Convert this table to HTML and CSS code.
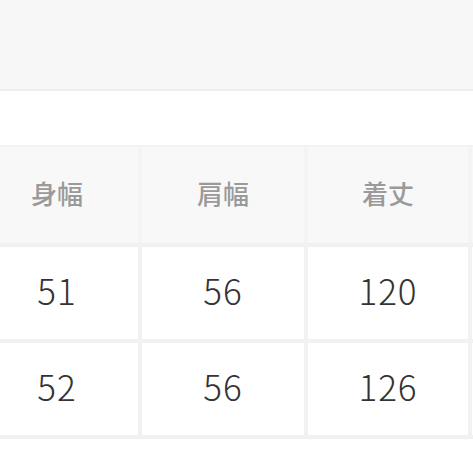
FILE: index.html
```html
<!DOCTYPE html>
<html lang="ja">
<head>
<meta charset="utf-8">
<link rel="stylesheet" href="styles.css">
</head>
<body>
<div class="topband"></div>
<div class="spacer"></div>
<div class="clip">
  <div class="table">
    <div class="row head">
      <div class="cell">身幅</div>
      <div class="cell">肩幅</div>
      <div class="cell">着丈</div>
      <div class="cell"></div>
    </div>
    <div class="row body">
      <div class="cell">51</div>
      <div class="cell">56</div>
      <div class="cell">120</div>
      <div class="cell"></div>
    </div>
    <div class="row body">
      <div class="cell">52</div>
      <div class="cell">56</div>
      <div class="cell">126</div>
      <div class="cell"></div>
    </div>
  </div>
</div>
</body>
</html>
```
FILE: styles.css
```css
html, body {
  margin: 0;
  padding: 0;
  background: #ffffff;
  overflow: hidden;
  width: 473px;
  height: 473px;
}
body {
  font-family: "Noto Sans CJK JP", "Noto Sans", sans-serif;
}
.topband {
  height: 89px;
  background: #f7f7f7;
  border-bottom: 2px solid #eeeeee;
}
.spacer {
  height: 54px;
}
.clip {
  width: 473px;
  overflow: hidden;
}
.table {
  border-top: 2px solid #f3f3f3;
  margin-left: -24px;
  width: 660px;
  display: flex;
  flex-direction: column;
  background: #f1f1f1;
  row-gap: 4px;
  padding-bottom: 4px;
}
.row {
  display: grid;
  grid-template-columns: 162px 162px 160px 162px;
  column-gap: 4px;
}
.head {
  background: #f4f4f4;
  height: 96px;
}
.body {
  height: 92px;
}
.cell {
  display: flex;
  align-items: center;
  justify-content: center;
}
.head .cell {
  background: #f8f8f8;
  color: #9a9a9a;
  font-size: 26px;
  font-weight: 500;
  padding-bottom: 6px;
}
.body .cell {
  background: #ffffff;
  color: #333333;
  font-size: 35px;
  font-weight: 300;
  letter-spacing: 1px;
  padding-bottom: 8px;
}
```
